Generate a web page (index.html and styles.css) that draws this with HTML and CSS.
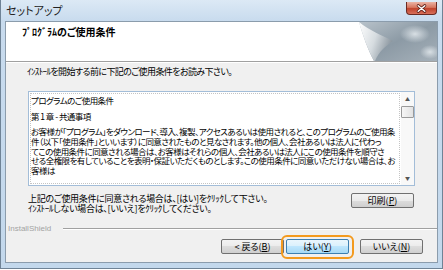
FILE: index.html
```html
<!DOCTYPE html>
<html lang="ja">
<head>
    <meta charset="UTF-8">
    <title>セットアップ</title>
    <link rel="stylesheet" href="styles.css">
</head>
<body>
    <div class="window">
        <div class="titlebar">
            <span class="title">セットアップ</span>
            <span class="close">
                <svg viewBox="0 0 31 13" width="31" height="13">
                    <path d="M12 3.5L19 9.5M19 3.5L12 9.5" stroke="#5a1f18" stroke-width="3.2" stroke-linecap="round"/>
                    <path d="M12 3.5L19 9.5M19 3.5L12 9.5" stroke="#fff" stroke-width="1.6" stroke-linecap="round"/>
                </svg>
            </span>
        </div>

        <div class="client">
            <div class="header">
                <div class="header-title">ﾌﾟﾛｸﾞﾗﾑのご使用条件</div>
                <svg class="header-art" viewBox="0 0 80 39" width="80" height="39">
                    <defs>
                        <linearGradient id="bg" x1="0" y1="0" x2="1" y2="1">
                            <stop offset="0" stop-color="#b9c3cb"/>
                            <stop offset="0.5" stop-color="#8c9aa5"/>
                            <stop offset="1" stop-color="#a6b1ba"/>
                        </linearGradient>
                        <radialGradient id="face" cx="0.5" cy="0.5" r="0.5">
                            <stop offset="0" stop-color="#d8dfe4"/>
                            <stop offset="1" stop-color="#d8dfe4" stop-opacity="0"/>
                        </radialGradient>
                        <linearGradient id="curl" x1="0" y1="0" x2="1" y2="0.4">
                            <stop offset="0" stop-color="#ffffff"/>
                            <stop offset="0.55" stop-color="#d6dce0"/>
                            <stop offset="1" stop-color="#8d98a1"/>
                        </linearGradient>
                    </defs>
                    <rect width="80" height="39" fill="url(#bg)"/>
                    <ellipse cx="58" cy="12" rx="15" ry="9" fill="url(#face)"/>
                    <ellipse cx="73" cy="30" rx="10" ry="7" fill="url(#face)"/>
                    <path d="M0 0H2C6 14 11 28 17 39H0Z" fill="#fff"/>
                    <path d="M2 0C12 8 26 14 36 19C30 23 22 29 18 39H17C11 28 6 14 2 0Z" fill="url(#curl)"/>
                </svg>
            </div>

            <p class="intro">ｲﾝｽﾄｰﾙを開始する前に下記のご使用条件をお読み下さい。</p>

            <div class="license">
                <div class="license-text">
                    <p>プログラムのご使用条件</p>
                    <p>第 1 章 - 共通事項</p>
                    <p class="para">
                        <span>お客様が「プログラム」をダウンロード、導入、複製、アクセスあるいは使用されると、このプログラムのご使用条</span>
                        <span>件（以下「使用条件」といいます）に同意されたものと見なされます。他の個人、会社あるいは法人に代わっ</span>
                        <span>てこの使用条件に同意される場合は、お客様はそれらの個人、会社あるいは法人にこの使用条件を順守さ</span>
                        <span>せる全権限を有していることを表明・保証いただくものとします。この使用条件に同意いただけない場合は、お</span>
                        <span>客様は</span>
                    </p>
                </div>
                <div class="scrollbar">
                    <span class="arrow">&#9650;</span>
                    <span class="thumb"></span>
                    <span class="track"></span>
                    <span class="arrow">&#9660;</span>
                </div>
            </div>

            <div class="agree">
                <p>上記のご使用条件に同意される場合は、[はい]をｸﾘｯｸして下さい。<br>ｲﾝｽﾄｰﾙしない場合は、[いいえ]をｸﾘｯｸしてください。</p>
                <button class="btn">印刷(<u>P</u>)</button>
            </div>

            <div class="brand">
                <span>InstallShield</span>
                <span class="rule"></span>
            </div>

            <div class="actions">
                <button class="btn back">&lt; 戻る(<u>B</u>)</button>
                <button class="btn default">はい(<u>Y</u>)</button>
                <button class="btn cancel">いいえ(<u>N</u>)</button>
            </div>
        </div>
    </div>
</body>
</html>
```

FILE: styles.css
```css
body {
    margin: 0;
    width: 443px;
    height: 270px;
    overflow: hidden;
    background-color: #fff;
    font-family: "Noto Sans CJK JP", sans-serif;
    font-feature-settings: "palt";
    color: #000;
}

p {
    margin: 0;
}

.window {
    width: 443px;
    height: 269px;
    box-sizing: border-box;
    display: flex;
    flex-direction: column;
    padding: 0 4px 5px 4px;
    border: 1px solid #6f8396;
    border-top: none;
    background: linear-gradient(#dce9f5, #c8dbee 21px, #c3d8ec);
}

.titlebar {
    height: 21px;
    flex: none;
    display: flex;
    justify-content: space-between;
    padding-left: 1px;
}

.title {
    font-size: 11px;
    line-height: 21px;
    color: #222;
}

.close {
    width: 31px;
    height: 13px;
    margin: 2px 1px 0 0;
    border: 1px solid #6b2a22;
    border-top: none;
    border-radius: 0 0 4px 4px;
    box-sizing: border-box;
    background: linear-gradient(#eab3a4, #d7765f 45%, #c0432c 55%, #d8705a);
    display: flex;
}

.client {
    flex: 1;
    display: flex;
    flex-direction: column;
    background-color: #f0f0f0;
    border: 1px solid #8b9cac;
}

.header {
    height: 39px;
    flex: none;
    display: flex;
    justify-content: space-between;
    background-color: #fff;
    border-bottom: 1px solid #a0a0a0;
    box-shadow: 0 1px 0 #fff;
}

.header-title {
    padding: 4px 0 0 16px;
    font-size: 10px;
    font-weight: bold;
    line-height: 12px;
}

.intro {
    margin: 4px 0 0 21px;
    font-size: 9px;
    letter-spacing: -0.6px;
    line-height: 12px;
}

.license {
    width: 387px;
    height: 95px;
    box-sizing: border-box;
    margin: 13px 0 0 22px;
    display: flex;
    background-color: #fff;
    border: 1px solid #a3bdd8;
}

.license-text {
    flex: 1;
    padding: 3px 2px 0 2px;
    font-size: 8.5px;
    letter-spacing: -0.55px;
    line-height: 10px;
    white-space: nowrap;
    overflow: hidden;
    outline: 1px dotted #c4c4c4;
    outline-offset: -2px;
}

.license-text p {
    margin-bottom: 6px;
}

.para span {
    display: block;
    line-height: 9.75px;
}

.scrollbar {
    width: 13px;
    display: flex;
    flex-direction: column;
    background-color: #f8f8f8;
}

.arrow {
    height: 14px;
    font-size: 5px;
    line-height: 14px;
    text-align: center;
    color: #555;
}

.thumb {
    height: 12px;
    box-sizing: border-box;
    border: 1px solid #9a9a9a;
    border-radius: 1px;
    background: linear-gradient(90deg, #f6f6f6, #e2e2e2);
}

.track {
    flex: 1;
}

.agree {
    width: 386px;
    margin: 7px 0 0 22px;
    display: flex;
    justify-content: space-between;
    align-items: flex-start;
}

.agree p {
    padding-top: 1px;
    font-size: 9px;
    letter-spacing: -0.3px;
    line-height: 10px;
}

.brand {
    height: 12px;
    margin-top: 8px;
    padding-left: 2px;
    display: flex;
    align-items: center;
    font-family: "Liberation Sans", sans-serif;
    font-size: 8px;
    color: #a3a3a3;
}

.rule {
    flex: 1;
    margin-left: 12px;
    border-top: 1px solid #a0a0a0;
    box-shadow: 0 1px 0 #fff;
}

.actions {
    margin-top: 5px;
    padding-right: 14px;
    display: flex;
    justify-content: flex-end;
}

.btn {
    width: 63px;
    height: 15px;
    padding: 0;
    box-sizing: border-box;
    font-family: "Noto Sans CJK JP", sans-serif;
    font-feature-settings: "palt";
    font-size: 9px;
    line-height: 13px;
    color: #000;
    border: 1px solid #707070;
    border-radius: 2px;
    background: linear-gradient(#f3f3f3, #ebebeb 50%, #dddddd 50%, #cfcfcf);
}

.back {
    margin-right: 2px;
}

.cancel {
    margin-left: 11px;
}

.default {
    position: relative;
    border-color: #3c7fb1;
    background: linear-gradient(#eaf6fd, #d9f0fc 50%, #bee6fd 50%, #a7d9f5);
}

/* orange highlight drawn over the default button */
.default::after {
    content: "";
    position: absolute;
    top: -5px;
    right: -6px;
    bottom: -6px;
    left: -6px;
    border: 2px solid #f39a1e;
    border-radius: 6px;
}
```
